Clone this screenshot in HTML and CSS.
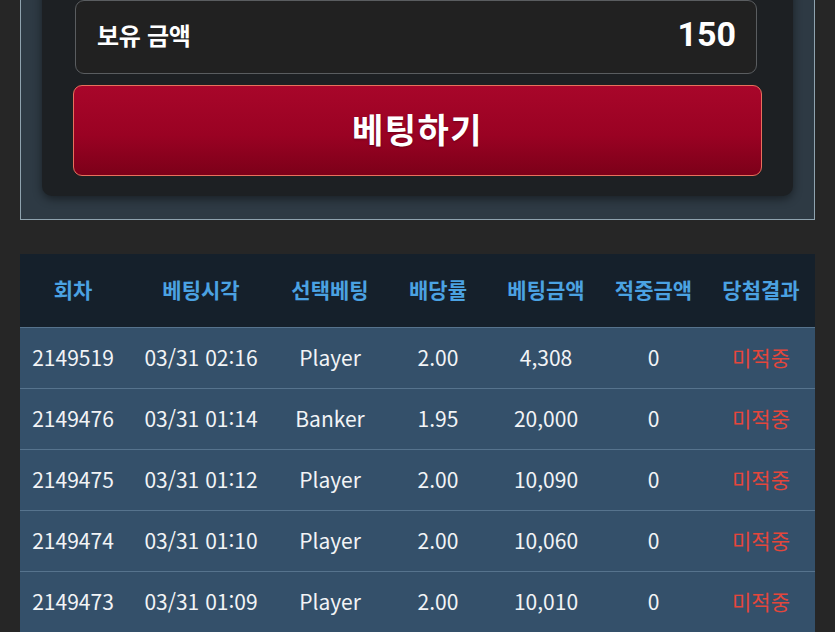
FILE: index.html
```html
<!DOCTYPE html>
<html lang="ko">
<head>
  <meta charset="UTF-8">
  <meta name="viewport" content="width=device-width, initial-scale=1.0">
  <title>베팅</title>
  <link rel="stylesheet" href="styles.css">
</head>
<body>

  <!-- Bet panel -->
  <div class="panel">
    <div class="card">
      <div class="balance">
        <span class="balance-label">보유 금액</span>
        <span class="balance-value">150</span>
      </div>
      <button class="bet-button">베팅하기</button>
    </div>
  </div>

  <!-- Bet history -->
  <div class="history">
    <div class="row head">
      <div>회차</div>
      <div>베팅시각</div>
      <div>선택베팅</div>
      <div>배당률</div>
      <div>베팅금액</div>
      <div>적중금액</div>
      <div>당첨결과</div>
    </div>
    <div class="row">
      <div>2149519</div>
      <div>03/31 02:16</div>
      <div>Player</div>
      <div>2.00</div>
      <div>4,308</div>
      <div>0</div>
      <div class="miss">미적중</div>
    </div>
    <div class="row">
      <div>2149476</div>
      <div>03/31 01:14</div>
      <div>Banker</div>
      <div>1.95</div>
      <div>20,000</div>
      <div>0</div>
      <div class="miss">미적중</div>
    </div>
    <div class="row">
      <div>2149475</div>
      <div>03/31 01:12</div>
      <div>Player</div>
      <div>2.00</div>
      <div>10,090</div>
      <div>0</div>
      <div class="miss">미적중</div>
    </div>
    <div class="row">
      <div>2149474</div>
      <div>03/31 01:10</div>
      <div>Player</div>
      <div>2.00</div>
      <div>10,060</div>
      <div>0</div>
      <div class="miss">미적중</div>
    </div>
    <div class="row">
      <div>2149473</div>
      <div>03/31 01:09</div>
      <div>Player</div>
      <div>2.00</div>
      <div>10,010</div>
      <div>0</div>
      <div class="miss">미적중</div>
    </div>
  </div>

</body>
</html>
```

FILE: styles.css
```css
/* General */
body {
  margin: 0;
  padding: 0 20px;
  background: #262626;
  font-family: "Noto Sans CJK KR", "Noto Sans", sans-serif;
  color: #ffffff;
  overflow: hidden;
}

/* Bet panel */
.panel {
  margin-top: -40px;
  padding: 0 21px 23px 21px;
  background: #2e3a44;
  border: 1px solid #8fa3af;
}

.card {
  padding: 39px 31px 20px 31px;
  background: #1d2023;
  border-radius: 10px;
  box-shadow: 0 3px 10px rgba(0, 0, 0, 0.45);
}

.balance {
  display: flex;
  justify-content: space-between;
  align-items: center;
  height: 72px;
  margin: 0 5px 0 2px;
  padding: 0 20px 5px 21px;
  box-sizing: border-box;
  height: 74px;
  background: #212121;
  border: 1px solid #5a5d60;
  border-radius: 9px;
}

.balance-label {
  font-size: 24px;
  font-weight: 700;
  letter-spacing: -0.3px;
}

.balance-value {
  font-family: Roboto, "Noto Sans", sans-serif;
  font-size: 34px;
  font-weight: 700;
  margin-top: -2px;
}

.bet-button {
  display: block;
  width: 100%;
  height: 91px;
  margin-top: 11px;
  padding: 0 0 4px 0;
  background: linear-gradient(to bottom, #a8062a 0%, #9a0223 55%, #7c0019 100%);
  border: 1px solid #e8705c;
  border-radius: 9px;
  color: #ffffff;
  font-family: "Noto Sans CJK KR", "Noto Sans", sans-serif;
  font-size: 34px;
  font-weight: 700;
  letter-spacing: 1.5px;
  text-shadow: 0 1px 2px rgba(0, 0, 0, 0.3);
}

/* Bet history */
.history {
  margin-top: 34px;
  background: #34506a;
}

.row {
  display: grid;
  grid-template-columns: 106px 150px 108px 108px 108px 107px 108px;
  align-items: center;
  box-sizing: border-box;
  height: 61px;
  padding-bottom: 3px;
  border-top: 1px solid #56738d;
  font-size: 21px;
  text-align: center;
  color: #f2f4f6;
}

.row.head {
  height: 73px;
  border-top: none;
  background: #15202b;
  color: #4ba2e2;
  font-size: 21px;
  font-weight: 700;
}

.miss {
  color: #e4463b;
}
```
